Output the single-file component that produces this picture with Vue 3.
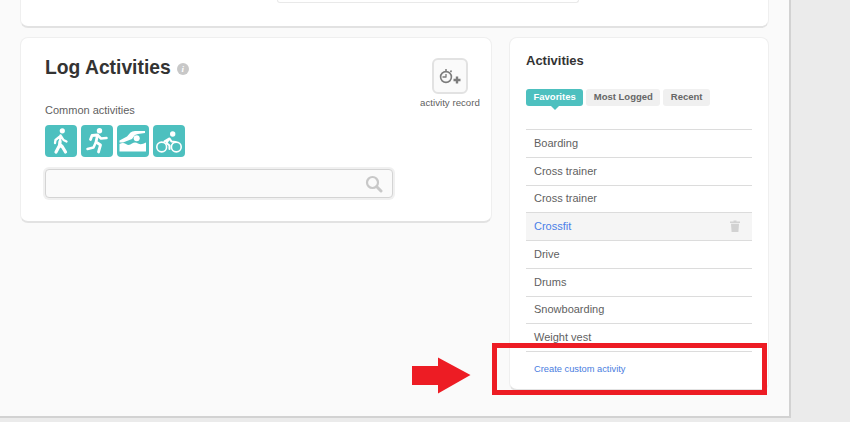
<template>
  <div class="screen">
    <div class="page">
      <div class="top-card">
        <div class="top-field" />
      </div>

      <div class="columns">
        <section class="card log-card">
          <div class="log-main">
            <h1 class="log-title">
              Log Activities
              <span class="info">i</span>
            </h1>
            <p class="common-label">Common activities</p>
            <div class="common-icons">
              <button class="sport">
                <svg width="32" height="32" viewBox="0 0 32 32">
                  <circle cx="17.3" cy="5.8" r="2.6" fill="#fff" />
                  <path d="M15.5 10.5 L15 18 M15.5 11 L10.5 15 L10 18 M16 11 L18.5 15 L21.5 16.5" stroke="#fff" stroke-width="2.3" fill="none" stroke-linecap="round" stroke-linejoin="round" />
                  <path d="M15 16.5 L14.5 20.5 L11 27 M15 19.5 L17.5 22 L20.5 27" stroke="#fff" stroke-width="3.2" fill="none" stroke-linecap="round" stroke-linejoin="round" />
                </svg>
              </button>
              <button class="sport">
                <svg width="32" height="32" viewBox="0 0 32 32">
                  <circle cx="18.5" cy="5.8" r="2.7" fill="#fff" />
                  <path d="M9.5 14.5 L11 10.5 L16.5 10 L15 17 L19.5 20 L17.5 27" stroke="#fff" stroke-width="2.8" fill="none" stroke-linecap="round" stroke-linejoin="round" />
                  <path d="M17 10.5 L20 13.5 L25.5 13 M14.5 18 L12.5 22.5 L6.5 24" stroke="#fff" stroke-width="2.5" fill="none" stroke-linecap="round" stroke-linejoin="round" />
                </svg>
              </button>
              <button class="sport">
                <svg width="32" height="32" viewBox="0 0 32 32">
                  <circle cx="19.7" cy="13.3" r="3" fill="#fff" />
                  <path d="M2.5 15.5 L10 11.5 L13.5 7.5 Q15 6 18 6 L28 6 L28 8 L21 9 L18 10 L15 14 L6 17.5 L2.5 17.5 Z" fill="#fff" />
                  <path d="M2.5 19 Q6 17 9 19 Q12 21 15 18.5 Q18 16.5 21 18.5 Q24 20.5 29 17.5 L29 26.5 L2.5 26.5 Z" fill="#fff" />
                </svg>
              </button>
              <button class="sport">
                <svg width="32" height="32" viewBox="0 0 32 32">
                  <circle cx="19.7" cy="9" r="2.7" fill="#fff" />
                  <circle cx="8.7" cy="22" r="4.9" fill="none" stroke="#fff" stroke-width="1.6" />
                  <circle cx="23.3" cy="22" r="4.9" fill="none" stroke="#fff" stroke-width="1.6" />
                  <path d="M11.5 16.5 L16.5 13.5 L18.5 16.5 L22.5 17 M16 14 L13.5 18 L16.5 20.5 L16.5 24" stroke="#fff" stroke-width="2.1" fill="none" stroke-linecap="round" stroke-linejoin="round" />
                </svg>
              </button>
            </div>
            <div class="search">
              <svg class="search-icon" width="18" height="18" viewBox="0 0 18 18">
                <circle cx="7.5" cy="7.5" r="5.5" fill="none" stroke="#c8c8c8" stroke-width="2.2" />
                <path d="M11.8 11.8 L16 16" stroke="#c8c8c8" stroke-width="3" stroke-linecap="round" />
              </svg>
            </div>
          </div>

          <div class="record">
            <div class="record-button">
              <svg width="26" height="26" viewBox="0 0 26 26">
                <circle cx="9" cy="14" r="5.4" fill="none" stroke="#7c7c7c" stroke-width="1.6" />
                <path d="M9.5 14 L5.5 14 M9 14 L9 11" stroke="#7c7c7c" stroke-width="1.3" fill="none" />
                <path d="M9 6 L9 8 M14.5 7.5 L13.5 9" stroke="#7c7c7c" stroke-width="1.5" />
                <path d="M20 13.5 L20 20.5 M16.5 17 L23.5 17" stroke="#7c7c7c" stroke-width="2.4" />
              </svg>
            </div>
            <span class="record-label">activity record</span>
          </div>
        </section>

        <aside class="card activities-card">
          <h2 class="activities-title">Activities</h2>
          <div class="tabs">
            <span
              v-for="tab in tabs"
              :key="tab"
              class="tab"
              :class="{ 'tab-active': tab === 'Favorites' }"
            >{{ tab }}</span>
          </div>
          <ul class="activity-list">
            <li
              v-for="(item, i) in activities"
              :key="i"
              class="activity"
              :class="{ 'activity-hover': item === 'Crossfit' }"
            >
              <span>{{ item }}</span>
              <svg v-if="item === 'Crossfit'" width="10" height="12" viewBox="0 0 10 12">
                <path d="M3.5 0.5 H6.5 V1.5 H10 V3 H0 V1.5 H3.5 Z M1 3.8 H9 L8.4 12 H1.6 Z" fill="#d2d2d2" />
              </svg>
            </li>
          </ul>
          <a class="create-link">Create custom activity</a>
        </aside>
      </div>
    </div>

    <!-- annotation drawn over the screenshot -->
    <svg class="arrow" width="60" height="38" viewBox="0 0 60 38">
      <path d="M1 9 H27 V0.5 L59.5 18 L27 36.5 V28 H1 Z" fill="#ed1c24" />
    </svg>
    <div class="highlight" />
  </div>
</template>

<script setup>
const tabs = ['Favorites', 'Most Logged', 'Recent']

const activities = [
  'Boarding',
  'Cross trainer',
  'Cross trainer',
  'Crossfit',
  'Drive',
  'Drums',
  'Snowboarding',
  'Weight vest'
]
</script>

<style>
html, body {
  margin: 0;
  background: #e9e9e9;
}
</style>

<style scoped>
.screen {
  position: relative;
  width: 850px;
  height: 422px;
  overflow: hidden;
  background: #ebebeb;
  font-family: "Liberation Sans", Arial, sans-serif;
}

.page {
  box-sizing: border-box;
  width: 791px;
  height: 418px;
  padding: 0 20px;
  background: #fafafa;
  border-right: 2px solid #d2d2d2;
  border-bottom: 2px solid #d2d2d2;
  overflow: hidden;
}

.top-card {
  box-sizing: border-box;
  width: 749px;
  height: 28px;
  padding-left: 256px;
  background: #fff;
  border: 1px solid #efefef;
  border-top: 0;
  border-bottom: 2px solid #e2e2e2;
  border-radius: 0 0 8px 8px;
}

.top-field {
  width: 300px;
  height: 2px;
  border: 1px solid #e9e9e9;
  border-top: 0;
  border-radius: 0 0 3px 3px;
}

.columns {
  display: flex;
  align-items: flex-start;
  gap: 17px;
  margin-top: 9px;
}

.card {
  flex-shrink: 0;
  box-sizing: border-box;
  background: #fff;
  border: 1px solid #efefef;
  border-bottom: 2px solid #e2e2e2;
  border-radius: 8px;
}

.log-card {
  display: flex;
  justify-content: space-between;
  width: 472px;
  height: 186px;
  padding: 18px 10px 0 24px;
}

.log-main {
  width: 349px;
}

.log-title {
  display: flex;
  align-items: center;
  gap: 6px;
  margin: 1px 0 0;
  height: 22px;
  font-size: 19.3px;
  line-height: 22px;
  font-weight: 700;
  color: #333;
}

.info {
  width: 12px;
  height: 12px;
  margin-top: 2px;
  border-radius: 50%;
  background: #c8c8c8;
  color: #fff;
  font-family: "Liberation Serif", serif;
  font-size: 9px;
  font-style: italic;
  line-height: 12px;
  text-align: center;
}

.common-label {
  margin: 24px 0 0;
  font-size: 11px;
  line-height: 14px;
  color: #5f5f5f;
}

.common-icons {
  display: flex;
  gap: 4px;
  margin-top: 8px;
}

.sport {
  display: block;
  width: 32px;
  height: 32px;
  padding: 0;
  border: 0;
  border-radius: 4px;
  background: #4dc0bf;
}

.sport svg {
  display: block;
}

.search {
  display: flex;
  align-items: center;
  justify-content: flex-end;
  box-sizing: border-box;
  width: 348px;
  height: 29px;
  margin-top: 12px;
  padding-right: 9px;
  background: #fafafa;
  border: 1px solid #d4d4d4;
  border-radius: 4px;
  box-shadow: 0 0 0 2px #f0f0f0;
}

.record {
  display: flex;
  flex-direction: column;
  align-items: center;
  width: 62px;
  padding-top: 2px;
}

.record-button {
  display: flex;
  align-items: center;
  justify-content: center;
  box-sizing: border-box;
  width: 36px;
  height: 36px;
  background: #fafafa;
  border: 2px solid #e2e2e2;
  border-radius: 6px;
}

.record-label {
  margin-top: 2px;
  font-size: 9.7px;
  line-height: 13px;
  color: #5f5f5f;
  white-space: nowrap;
}

.activities-card {
  width: 260px;
  height: 354px;
  padding: 14px 16px 0;
}

.activities-title {
  margin: 0;
  font-size: 13px;
  line-height: 17px;
  font-weight: 700;
  color: #333;
}

.tabs {
  display: flex;
  gap: 3px;
  margin-top: 20px;
}

.tab {
  padding: 0 7.5px;
  height: 17px;
  border-radius: 3px;
  background: #f0f0f0;
  font-size: 9.5px;
  line-height: 16px;
  font-weight: 700;
  color: #666;
}

.tab-active {
  position: relative;
  background: #4dc0bf;
  color: #fff;
}

.tab-active::after {
  content: "";
  position: absolute;
  left: 50%;
  top: 17px;
  margin-left: -4px;
  border-left: 4px solid transparent;
  border-right: 4px solid transparent;
  border-top: 4px solid #4dc0bf;
}

.activity-list {
  margin: 23px 0 0;
  padding: 0;
  list-style: none;
  border-top: 1px solid #dcdcdc;
}

.activity {
  display: flex;
  align-items: center;
  justify-content: space-between;
  box-sizing: border-box;
  height: 27.75px;
  padding: 0 12px 1px 8px;
  border-bottom: 1px solid #dcdcdc;
  font-size: 11px;
  color: #5f5f5f;
}

.activity-hover {
  background: #f5f5f5;
  color: #4a80e8;
}

.create-link {
  display: block;
  margin: 12px 0 0 8px;
  font-size: 9.3px;
  line-height: 11px;
  color: #4a7de0;
}

.arrow {
  position: absolute;
  left: 411px;
  top: 357px;
}

.highlight {
  position: absolute;
  left: 492px;
  top: 343px;
  box-sizing: border-box;
  width: 275px;
  height: 52px;
  border: 5px solid #ed1c24;
}
</style>
